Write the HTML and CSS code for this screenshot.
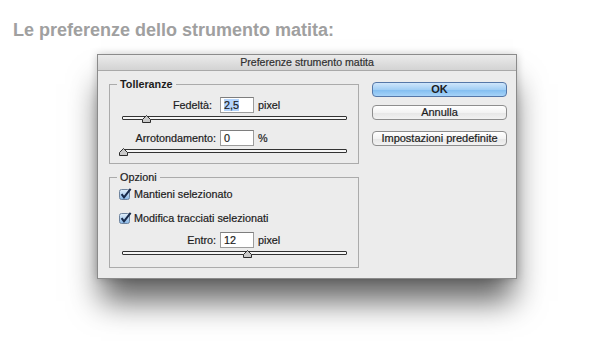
FILE: index.html
```html
<!DOCTYPE html>
<html lang="it">
<head>
    <meta charset="UTF-8">
    <meta name="viewport" content="width=device-width, initial-scale=1.0">
    <title>Preferenze strumento matita</title>
    <link rel="stylesheet" href="styles.css">
</head>
<body>

<h1 class="page-title">Le preferenze dello strumento matita:</h1>

<div class="dialog">
    <div class="dialog-title">Preferenze strumento matita</div>
    <div class="dialog-body">
        <div class="dialog-main">
            <fieldset class="group">
                <legend class="group-title group-title--bold">Tolleranze</legend>
                <div class="field-row">
                    <label class="field-label field-label--inset">Fedeltà:</label>
                    <span class="field-input"><span class="selected">2,5</span></span>
                    <span class="field-unit">pixel</span>
                </div>
                <div class="slider">
                    <svg class="slider-thumb" style="left: 24px" width="9" height="8" viewBox="0 0 9 8"><path d="M4.5 0.5 L8.5 4.5 V7.5 H0.5 V4.5 Z" fill="#c9c9c9" stroke="#2b2b2b"/></svg>
                </div>
                <div class="field-row field-row--spaced">
                    <label class="field-label">Arrotondamento:</label>
                    <span class="field-input">0</span>
                    <span class="field-unit">%</span>
                </div>
                <div class="slider">
                    <svg class="slider-thumb" style="left: 1px" width="9" height="8" viewBox="0 0 9 8"><path d="M4.5 0.5 L8.5 4.5 V7.5 H0.5 V4.5 Z" fill="#c9c9c9" stroke="#2b2b2b"/></svg>
                </div>
            </fieldset>

            <fieldset class="group group--second">
                <legend class="group-title">Opzioni</legend>
                <div class="check-row">
                    <svg class="check" width="13" height="12" viewBox="0 0 13 12">
                        <defs><linearGradient id="cb1" x1="0" y1="0" x2="0" y2="1"><stop offset="0" stop-color="#e4f0fb"/><stop offset="1" stop-color="#86b6e6"/></linearGradient></defs>
                        <rect x="0.5" y="1.5" width="10" height="10" rx="2" fill="url(#cb1)" stroke="#6f849e"/>
                        <path d="M2.6 6.2 L5 9.4 L11.6 0.8" fill="none" stroke="#17294a" stroke-width="2"/>
                    </svg>
                    <span>Mantieni selezionato</span>
                </div>
                <div class="check-row check-row--spaced">
                    <svg class="check" width="13" height="12" viewBox="0 0 13 12">
                        <defs><linearGradient id="cb2" x1="0" y1="0" x2="0" y2="1"><stop offset="0" stop-color="#e4f0fb"/><stop offset="1" stop-color="#86b6e6"/></linearGradient></defs>
                        <rect x="0.5" y="1.5" width="10" height="10" rx="2" fill="url(#cb2)" stroke="#6f849e"/>
                        <path d="M2.6 6.2 L5 9.4 L11.6 0.8" fill="none" stroke="#17294a" stroke-width="2"/>
                    </svg>
                    <span>Modifica tracciati selezionati</span>
                </div>
                <div class="field-row field-row--entro">
                    <label class="field-label">Entro:</label>
                    <span class="field-input">12</span>
                    <span class="field-unit">pixel</span>
                </div>
                <div class="slider">
                    <svg class="slider-thumb" style="left: 125px" width="9" height="8" viewBox="0 0 9 8"><path d="M4.5 0.5 L8.5 4.5 V7.5 H0.5 V4.5 Z" fill="#c9c9c9" stroke="#2b2b2b"/></svg>
                </div>
            </fieldset>
        </div>

        <div class="dialog-buttons">
            <button class="btn btn--default">OK</button>
            <button class="btn btn--cancel">Annulla</button>
            <button class="btn btn--reset">Impostazioni predefinite</button>
        </div>
    </div>
</div>

</body>
</html>
```

FILE: styles.css
```css
body {
    margin: 0;
    padding: 0;
    width: 600px;
    height: 341px;
    overflow: hidden;
    background-color: #fff;
    font-family: "Liberation Sans", Arial, sans-serif;
    color: #1c1c1c;
}

.page-title {
    margin: 0;
    padding: 20px 0 0 13px;
    font-size: 18px;
    line-height: 20px;
    font-weight: bold;
    color: #a0a0a0;
}

.dialog {
    margin: 14px 0 0 97px;
    width: 420px;
    height: 225px;
    box-sizing: border-box;
    border: 1px solid #8b8b8b;
    background-color: #ececec;
    box-shadow: 0 26px 30px -4px rgba(0, 0, 0, 0.62), 0 0 8px rgba(0, 0, 0, 0.2);
    -webkit-text-stroke: 0.2px;
}

.dialog-title {
    height: 15px;
    line-height: 15px;
    text-align: center;
    font-size: 10.6px;
    color: #303030;
    background: linear-gradient(#ebebeb, #d3d3d3);
    border-bottom: 1px solid #a9a9a9;
}

.dialog-body {
    display: flex;
    padding: 7px 9px 10px 11px;
}

.dialog-main {
    width: 250px;
}

.group {
    margin: 0;
    width: 250px;
    box-sizing: border-box;
    padding: 6px 11px 10px 9px;
    border: 1px solid #ababab;
    font-size: 10.8px;
}

.group--second {
    margin-top: 7px;
    padding: 3px 11px 12px 9px;
}

.group-title {
    margin-left: -2px;
    padding: 0 3px;
    line-height: 13px;
    height: 13px;
}

.group-title--bold {
    font-weight: bold;
    -webkit-text-stroke: 0;
}

.field-row {
    display: flex;
    align-items: center;
    height: 16px;
}

.field-row--spaced {
    margin-top: 10px;
}

.field-row--entro {
    margin-top: 7px;
}

.field-label {
    width: 97px;
    text-align: right;
    box-sizing: border-box;
}

.field-label--inset {
    padding-right: 4px;
}

.field-input {
    margin-left: 4px;
    width: 34px;
    height: 16px;
    box-sizing: border-box;
    border: 1px solid #9c9c9c;
    border-top-color: #7e7e7e;
    background-color: #fff;
    padding-left: 3px;
    line-height: 14px;
}

.selected {
    background-color: #b4d4fb;
}

.field-unit {
    margin-left: 4px;
}

.slider {
    position: relative;
    margin: 3px 0 0 3px;
    width: 225px;
    height: 4px;
    box-sizing: border-box;
    border: 1px solid #333;
    border-radius: 1px;
    background-color: #f6f6f6;
}

.slider-thumb {
    position: absolute;
    top: -2px;
    margin-left: -5px;
    display: block;
}

.check-row {
    display: flex;
    align-items: center;
    height: 14px;
    gap: 2px;
}

.check-row--spaced {
    margin-top: 10px;
}

.check {
    display: block;
}

.dialog-buttons {
    display: flex;
    flex-direction: column;
    margin: 4px 0 0 13px;
    width: 135px;
}

.btn {
    height: 15px;
    padding: 0;
    box-sizing: border-box;
    border: 1px solid #8e8e8e;
    border-radius: 4px;
    background: linear-gradient(#ffffff, #f3f3f3 50%, #e6e6e6 51%, #f2f2f2);
    font-family: "Liberation Sans", Arial, sans-serif;
    font-size: 11px;
    line-height: 13px;
    color: #1c1c1c;
    -webkit-text-stroke: 0.2px;
}

.btn--default {
    font-weight: bold;
    -webkit-text-stroke: 0;
    border-color: #5577a8;
    background: linear-gradient(#cfe6fb, #a3cff5 50%, #80bcf0 51%, #a6d3f8);
}

.btn--cancel {
    margin-top: 8px;
}

.btn--reset {
    margin-top: 11px;
}
```
